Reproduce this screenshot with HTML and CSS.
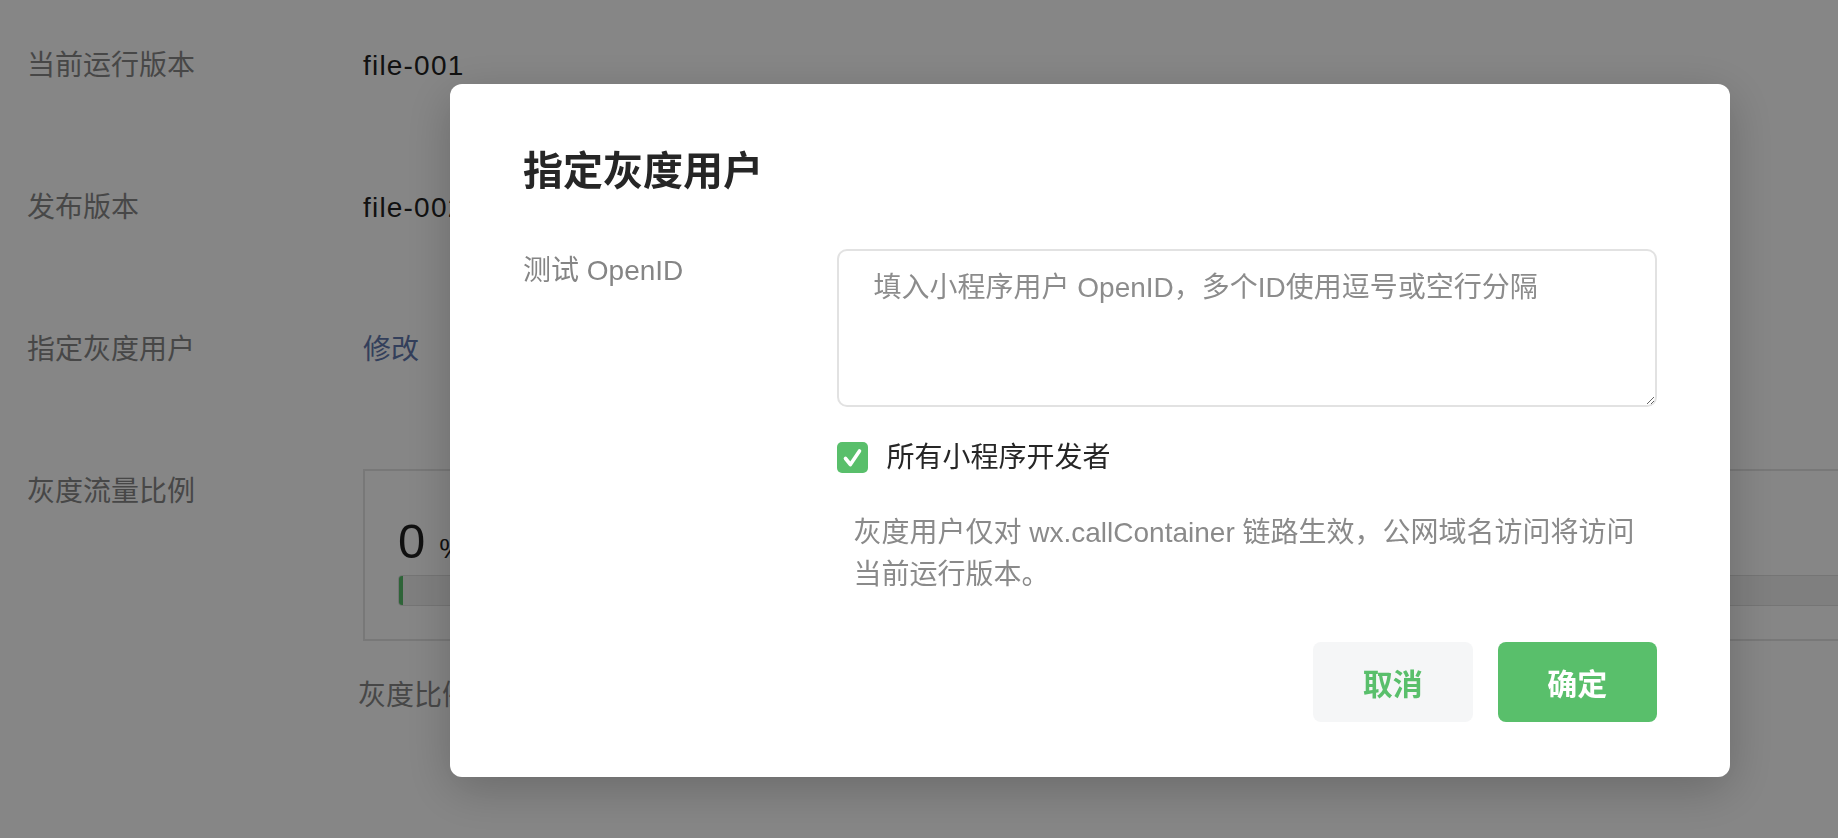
FILE: index.html
```html
<!DOCTYPE html>
<html lang="zh-CN">
<head>
<meta charset="utf-8">
<title>指定灰度用户</title>
<link rel="stylesheet" href="styles.css">
</head>
<body>
<div class="page">
  <div class="row">
    <div class="label">当前运行版本</div>
    <div class="value">file-001</div>
  </div>
  <div class="row">
    <div class="label">发布版本</div>
    <div class="value">file-002</div>
  </div>
  <div class="row">
    <div class="label">指定灰度用户</div>
    <div class="value"><a class="link">修改</a></div>
  </div>
  <div class="row row-top">
    <div class="label">灰度流量比例</div>
    <div class="value-block">
      <div class="ratio-box">
        <div class="ratio-num"><span class="num">0</span><span class="unit">%</span></div>
        <div class="bar"><div class="bar-fill"></div></div>
      </div>
      <div class="note">灰度比例调整后将立即生效</div>
    </div>
  </div>
</div>

<div class="mask">
  <div class="dialog">
    <h2 class="dialog-title">指定灰度用户</h2>
    <div class="form-row">
      <div class="form-label">测试 OpenID</div>
      <div class="form-field">
        <textarea class="textarea" placeholder="填入小程序用户 OpenID，多个ID使用逗号或空行分隔"></textarea>
        <div class="check-row">
          <span class="checkbox">
            <svg width="31" height="31" viewBox="0 0 31 31"><path d="M8.5 16.5 L13.4 22.5 L22.5 9" fill="none" stroke="#ffffff" stroke-width="3.6" stroke-linecap="round" stroke-linejoin="round"/></svg>
          </span>
          <span class="check-label">所有小程序开发者</span>
        </div>
        <p class="help">灰度用户仅对 wx.callContainer 链路生效，公网域名访问将访问当前运行版本。</p>
      </div>
    </div>
    <div class="actions">
      <button class="btn btn-cancel">取消</button>
      <button class="btn btn-ok">确定</button>
    </div>
  </div>
</div>
</body>
</html>
```
FILE: styles.css
```css
html, body {
  margin: 0;
  padding: 0;
  height: 100%;
  overflow: hidden;
  background: #ffffff;
  font-family: "Liberation Sans", "Noto Sans CJK SC", sans-serif;
}

.page {
  padding: 45.5px 0 0 27px;
  display: flex;
  flex-direction: column;
  gap: 102px;
}

.row {
  display: grid;
  grid-template-columns: 336px 1fr;
  font-size: 28px;
  line-height: 40px;
}

.row-top {
  align-items: start;
}

.label {
  color: #888888;
}

.value {
  color: #222222;
  letter-spacing: 1.2px;
}

.link {
  color: #6278ad;
  text-decoration: none;
  letter-spacing: 0;
}

.value-block {
  margin-top: -2.5px;
}

.ratio-box {
  width: 1560px;
  border: 2px solid #e4e4e4;
  box-sizing: border-box;
  padding: 42px 33px 33px;
}

.ratio-num {
  height: 56px;
  line-height: 56px;
  color: #1f1f1f;
  display: flex;
  align-items: baseline;
}

.num {
  font-size: 49px;
}

.unit {
  font-size: 28px;
  margin-left: 14px;
}

.bar {
  margin-top: 6px;
  height: 31px;
  box-sizing: border-box;
  border: 1px solid #dedede;
  background: #f2f2f2;
  border-radius: 4px;
  overflow: hidden;
}

.bar-fill {
  width: 4px;
  height: 100%;
  background: #59bf6b;
}

.note {
  margin-top: 35px;
  margin-left: -5px;
  color: #888888;
}

/* dialog */
.mask {
  position: fixed;
  inset: 0;
  background: rgba(0, 0, 0, 0.474);
  padding: 84px 0 0 450px;
}

.dialog {
  width: 1280px;
  box-sizing: border-box;
  background: #ffffff;
  border-radius: 12px;
  padding: 62px 73px 55px;
  box-shadow: 0 12px 48px rgba(0, 0, 0, 0.22);
}

.dialog-title {
  margin: 0 0 52.5px;
  font-size: 40px;
  line-height: 50px;
  font-weight: 700;
  color: #262626;
}

.form-row {
  display: grid;
  grid-template-columns: 313.5px 1fr;
}

.form-label {
  font-size: 28px;
  line-height: 43px;
  color: #858585;
}

.form-field {
  display: flex;
  flex-direction: column;
}

.textarea {
  display: block;
  width: 100%;
  height: 158px;
  box-sizing: border-box;
  border: 2px solid #e2e2e2;
  border-radius: 10px;
  padding: 17px 35px;
  margin: 0;
  font-family: inherit;
  font-size: 28px;
  line-height: 40px;
  color: #222222;
  resize: vertical;
  outline: none;
  background: #ffffff;
}

.textarea::placeholder {
  color: #8c8c8c;
}

.check-row {
  margin-top: 35.5px;
  height: 31px;
  display: flex;
  align-items: center;
  gap: 19px;
}

.checkbox {
  width: 31px;
  height: 31px;
  border-radius: 5px;
  background: #59bf6b;
  display: flex;
  align-items: center;
  justify-content: center;
}

.checkbox svg {
  display: block;
}

.check-label {
  font-size: 28px;
  line-height: 40px;
  color: #262626;
}

.help {
  margin: 38.5px 0 0;
  padding: 0 17px;
  font-size: 28px;
  line-height: 42px;
  color: #8a8a8a;
}

.actions {
  margin-top: 46px;
  display: flex;
  justify-content: flex-end;
  gap: 25px;
}

.btn {
  width: 159.5px;
  height: 80px;
  border: none;
  border-radius: 8px;
  font-family: inherit;
  font-size: 30px;
  font-weight: 700;
  padding: 0;
  cursor: pointer;
}

.btn-cancel {
  background: #f5f6f7;
  color: #59bf6b;
}

.btn-ok {
  background: #59bf6b;
  color: #ffffff;
}
```
